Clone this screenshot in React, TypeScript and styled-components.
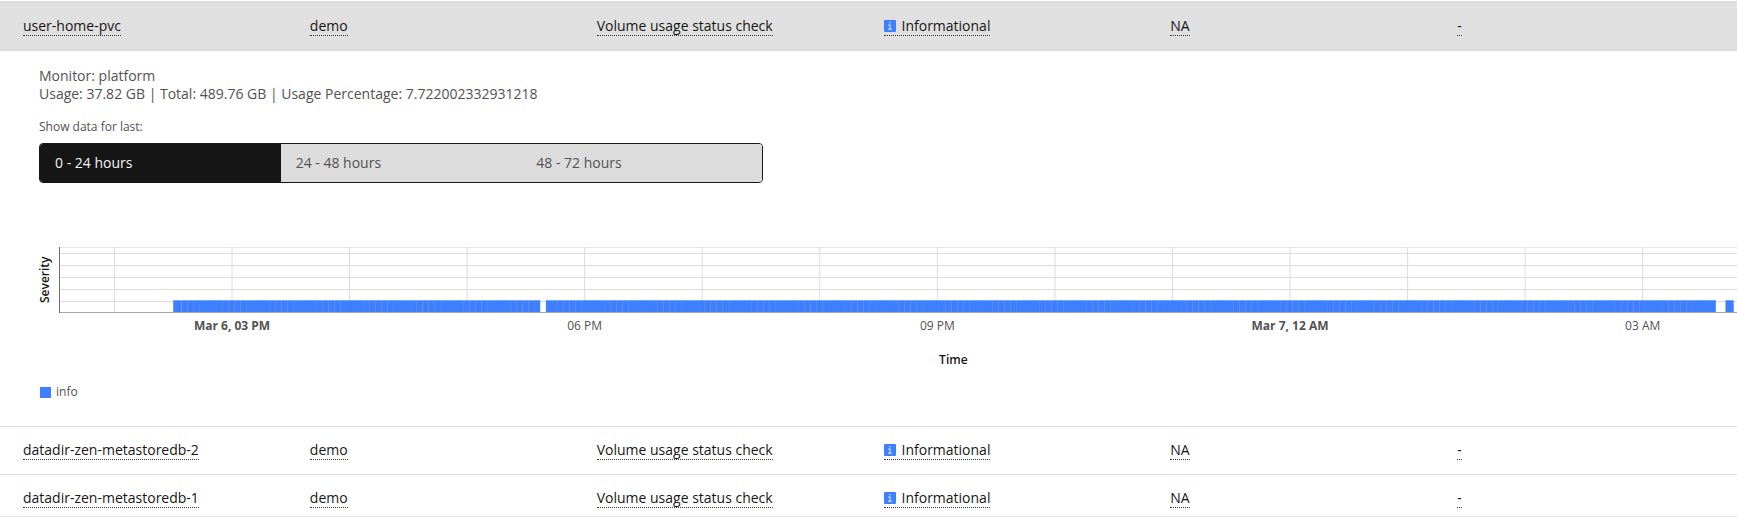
import React, { useState } from "react";
import styled, { createGlobalStyle, css } from "styled-components";

const GlobalStyle = createGlobalStyle`
  * { box-sizing: border-box; }
  body {
    margin: 0;
    background: #fff;
    color: #161616;
    font: 400 14px/18px "Open Sans", sans-serif;
    overflow-x: hidden;
  }
`;

const Page = styled.main`
  padding-top: 1px;
`;

const Table = styled.table`
  display: block;
  width: 100%;
`;

const TableBody = styled.tbody`
  display: block;
`;

const Row = styled.tr<{ $expanded?: boolean; $last?: boolean }>`
  display: grid;
  grid-template-columns: repeat(6, minmax(0, 1fr));
  height: 48px;
  padding: 0 8px;
  border-bottom: 1px solid #dcdcdc;
  ${(p) =>
    p.$expanded &&
    css`
      height: 50px;
      background: #e0e0e0;
      border-top: 2px solid #dadcdb;
      border-bottom: 2px solid #dcdcdc;
    `}
  ${(p) =>
    p.$last &&
    css`
      height: 43px;
      border-bottom: 2px solid #e8e8e8;
    `}
`;

const Cell = styled.td`
  padding: 14px 15px 0;
  white-space: nowrap;
`;

const CellLink = styled.a`
  display: inline-flex;
  align-items: center;
  gap: 6px;
  height: 19px;
  border-bottom: 1px dotted #393939;
  color: inherit;
  text-decoration: none;
`;

const DetailRow = styled.tr`
  display: block;
  border-bottom: 1px solid #dcdcdc;
`;

const DetailCell = styled.td`
  display: block;
  padding: 16px 0 25px 39px;
  color: #525252;
`;

const Summary = styled.p`
  margin: 0;
`;

const Caption = styled.p`
  margin: 15px 0 8px;
  font-size: 12px;
  line-height: 17px;
`;

const Switcher = styled.div`
  display: grid;
  grid-template-columns: repeat(3, 1fr);
  max-width: 724px;
  height: 40px;
  border: 1px solid #161616;
  border-radius: 4px;
  overflow: hidden;
`;

const Segment = styled.button<{ $active: boolean }>`
  padding: 0 15px;
  border: 0;
  background: ${(p) => (p.$active ? "#161616" : "#dcdcdc")};
  color: ${(p) => (p.$active ? "#f4f4f4" : "#525252")};
  font: inherit;
  text-align: left;
  cursor: pointer;
`;

const Chart = styled.figure`
  display: flex;
  margin: 64px 0 0;
`;

const AxisName = styled.span`
  width: 20px;
  height: 66px;
  padding-left: 9px;
  writing-mode: vertical-rl;
  transform: rotate(180deg);
  color: #161616;
  font-size: 12px;
  font-weight: 600;
  line-height: 11px;
  text-align: center;
`;

const Plot = styled.svg`
  flex: 1;
  min-width: 0;
  height: 126px;
  font-size: 12px;
`;

const Legend = styled.div`
  display: flex;
  align-items: center;
  gap: 5px;
  margin-top: 10px;
  padding-left: 1px;
  font-size: 12px;
`;

const Swatch = styled.span`
  width: 11px;
  height: 11px;
  background: #3d7fff;
`;

const DOMAIN_START = 13.5284;
const DOMAIN_HOURS = 14.2736;
const SAMPLE = 0.05;
const OVERLAP = 0.002;
const SERIES_START = 14.77;

const xPos = (hour: number) => `${((hour - DOMAIN_START) / DOMAIN_HOURS) * 100}%`;
const xLen = (hours: number) => `${(hours / DOMAIN_HOURS) * 100}%`;

const hourLines = Array.from({ length: 14 }, (_, i) => 14 + i);
const levels = [6, 18, 30, 42, 54];

const samples = [
  { start: 14.5, length: 0.07 },
  ...Array.from({ length: 261 }, (_, i) => i - 4)
    .filter((i) => i !== 57)
    .map((i) => ({ start: SERIES_START + i * SAMPLE, length: SAMPLE + OVERLAP })),
  { start: 27.704, length: 0.07 },
];

const ticks = [
  { hour: 15, text: "Mar 6, 03 PM", major: true },
  { hour: 18, text: "06 PM" },
  { hour: 21, text: "09 PM" },
  { hour: 24, text: "Mar 7, 12 AM", major: true },
  { hour: 27, text: "03 AM" },
];

function SeverityChart() {
  return (
    <Chart>
      <AxisName>Severity</AxisName>
      <Plot role="img" aria-label="Severity over time">
        <line x1="0" x2="100%" y1="0.5" y2="0.5" stroke="#e8e8e8" />
        {levels.map((y) => (
          <line key={y} x1="0" x2="100%" y1={y + 0.5} y2={y + 0.5} stroke="#dcdcdc" />
        ))}
        {hourLines.map((hour) => (
          <line key={hour} x1={xPos(hour)} x2={xPos(hour)} y1="0" y2="65" stroke="#dcdcdc" />
        ))}
        {samples.map((s) => (
          <rect key={s.start} x={xPos(s.start)} width={xLen(s.length)} y="53.3" height="12" fill="#3d7fff" />
        ))}
        <line x1="0" x2="100%" y1="65.5" y2="65.5" stroke="#a8a8a8" />
        <line x1="0.5" x2="0.5" y1="0" y2="66" stroke="#6f6f6f" />
        {ticks.map((t) => (
          <text
            key={t.hour}
            x={xPos(t.hour)}
            y="83"
            textAnchor="middle"
            fill="#525252"
            fontWeight={t.major ? 700 : 400}
          >
            {t.text}
          </text>
        ))}
        <text x="53.3%" y="117" textAnchor="middle" fill="#161616" fontWeight="600">
          Time
        </text>
      </Plot>
    </Chart>
  );
}

function InfoIcon() {
  return (
    <svg width="12" height="12" viewBox="0 0 12 12" aria-hidden="true">
      <rect width="12" height="12" rx="1" fill="#3d7fff" />
      <path d="M5.3 2h1.4v1.3H5.3zM4.2 4.6h2.4v4.2H8v1H4v-1h1.5V5.5H4.2z" fill="#dbe7ff" />
    </svg>
  );
}

function VolumeRow({ name, expanded, last }: { name: string; expanded?: boolean; last?: boolean }) {
  return (
    <Row $expanded={expanded} $last={last}>
      <Cell><CellLink href="#name">{name}</CellLink></Cell>
      <Cell><CellLink href="#namespace">demo</CellLink></Cell>
      <Cell><CellLink href="#check">Volume usage status check</CellLink></Cell>
      <Cell><CellLink href="#severity"><InfoIcon />Informational</CellLink></Cell>
      <Cell><CellLink href="#impact">NA</CellLink></Cell>
      <Cell><CellLink href="#notes">-</CellLink></Cell>
    </Row>
  );
}

const ranges = ["0 - 24 hours", "24 - 48 hours", "48 - 72 hours"];

export default function App() {
  const [active, setActive] = useState(0);
  return (
    <Page>
      <GlobalStyle />
      <Table>
        <TableBody>
          <VolumeRow name="user-home-pvc" expanded />
          <DetailRow>
            <DetailCell colSpan={6}>
              <Summary>Monitor: platform</Summary>
              <Summary>Usage: 37.82 GB | Total: 489.76 GB | Usage Percentage: 7.722002332931218</Summary>
              <Caption id="range-label">Show data for last:</Caption>
              <Switcher role="tablist" aria-labelledby="range-label">
                {ranges.map((range, i) => (
                  <Segment
                    key={range}
                    role="tab"
                    aria-selected={i === active}
                    $active={i === active}
                    onClick={() => setActive(i)}
                  >
                    {range}
                  </Segment>
                ))}
              </Switcher>
              <SeverityChart />
              <Legend><Swatch />info</Legend>
            </DetailCell>
          </DetailRow>
          <VolumeRow name="datadir-zen-metastoredb-2" />
          <VolumeRow name="datadir-zen-metastoredb-1" last />
        </TableBody>
      </Table>
    </Page>
  );
}
